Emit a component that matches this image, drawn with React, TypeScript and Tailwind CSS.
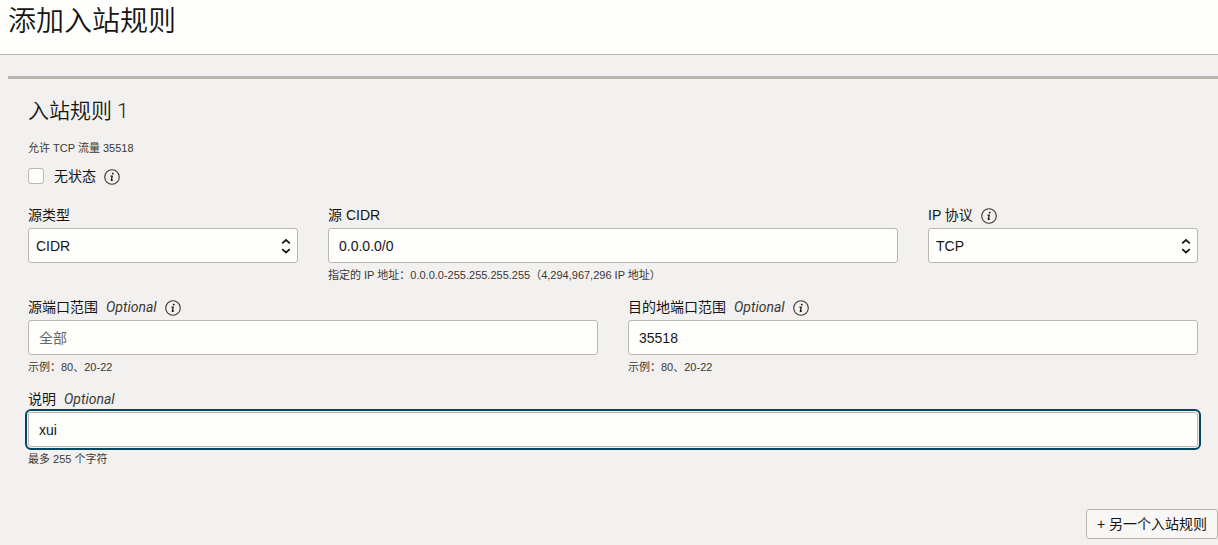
import React, { ReactNode, useState } from 'react';

interface FieldProps {
  id: string;
  label: string;
  optional?: boolean;
  info?: boolean;
  hint?: string;
  className?: string;
  children: ReactNode;
}

const InfoButton: React.FC<{ topic: string }> = ({ topic }) => (
  <button type="button" aria-label={topic} className="mt-px size-4 shrink-0">
    <svg viewBox="0 0 16 16" className="size-4" fill="none">
      <circle cx="8" cy="8" r="7.3" stroke="#3a3733" strokeWidth="1.1" />
      <circle cx="8.8" cy="4.6" r="0.95" fill="#161513" />
      <path
        d="M6.5 7.1h1.8l-1 3.9c-.1.6.6.5 1.6-.3"
        stroke="#161513"
        strokeWidth="1.2"
        strokeLinejoin="round"
      />
    </svg>
  </button>
);

const Field: React.FC<FieldProps> = ({
  id,
  label,
  optional = false,
  info = false,
  hint,
  className = '',
  children
}) => (
  <div className={className}>
    <div className="mb-[3px] flex h-5 items-center gap-2">
      <label htmlFor={id} className="flex gap-2">
        {label}
        {optional && (
          <em className="font-['Roboto','Noto_Sans_CJK_SC',sans-serif] text-[#3a3733]">
            Optional
          </em>
        )}
      </label>
      {info && <InfoButton topic={label} />}
    </div>
    {children}
    {hint && <p className="mt-1 text-[11px] leading-4 text-[#3a3733]">{hint}</p>}
  </div>
);

const TextInput: React.FC<React.InputHTMLAttributes<HTMLInputElement>> = ({
  className = '',
  ...props
}) => (
  <input
    type="text"
    className={`block h-[35px] w-full rounded-[3px] border border-[#bbb6ae] bg-[#fefefd] px-2.5 placeholder:text-[#6b6761] ${className}`}
    {...props}
  />
);

const Select: React.FC<{ id: string; options: string[] }> = ({ id, options }) => (
  <div className="relative">
    <select
      id={id}
      className="block h-[35px] w-full appearance-none rounded-[3px] border border-[#bbb6ae] bg-[#fefefd] pr-6 pl-[7px]"
    >
      {options.map((option) => (
        <option key={option}>{option}</option>
      ))}
    </select>
    <svg
      viewBox="0 0 10 16"
      className="pointer-events-none absolute top-2.5 right-[7px] h-4 w-2.5"
      fill="none"
      stroke="#161513"
      strokeWidth="1.7"
    >
      <path d="M1.2 5.4 5 2l3.8 3.4M1.2 11.1 5 14.5l3.8-3.4" />
    </svg>
  </div>
);

const App: React.FC = () => {
  const [stateless, setStateless] = useState(false);
  const [cidr, setCidr] = useState('0.0.0.0/0');
  const [sourcePorts, setSourcePorts] = useState('');
  const [destPorts, setDestPorts] = useState('35518');
  const [description, setDescription] = useState('xui');

  return (
    <div className="min-h-screen bg-[#f3f1f0] font-['Liberation_Sans','Noto_Sans_CJK_SC',sans-serif] text-sm leading-5 text-[#161513]">
      <header className="border-b border-[#bbb6ae] bg-[#fefefd] px-2 pt-0.5 pb-4">
        <h1 className="font-['Open_Sans','Noto_Sans_CJK_SC',sans-serif] text-[28px] leading-9 font-[350]">
          添加入站规则
        </h1>
      </header>

      <main className="pt-[21px] pl-2">
        <section className="border-t-3 border-[#bbb6ae] px-5 pt-[18px]">
          <h2 className="font-['Roboto','Noto_Sans_CJK_SC',sans-serif] text-[21px] leading-7 font-[350]">
            入站规则 1
          </h2>
          <p className="mt-[15px] text-[11px] leading-4 text-[#3a3733]">允许 TCP 流量 35518</p>

          <div className="mt-2.5 flex h-5 items-center gap-2">
            <label htmlFor="stateless" className="flex items-center gap-2.5">
              <input
                id="stateless"
                type="checkbox"
                checked={stateless}
                onChange={(e) => setStateless(e.target.checked)}
                className="size-4 appearance-none rounded-[3px] border border-[#bbb6ae] bg-[#fefefd] checked:bg-[#04536f]"
              />
              无状态
            </label>
            <InfoButton topic="无状态" />
          </div>

          <div className="mt-[19px] grid grid-cols-4 gap-x-[30px] gap-y-3.5">
            <Field id="source-type" label="源类型">
              <Select id="source-type" options={['CIDR']} />
            </Field>
            <Field
              id="source-cidr"
              label="源 CIDR"
              hint="指定的 IP 地址：0.0.0.0-255.255.255.255（4,294,967,296 IP 地址）"
              className="col-span-2"
            >
              <TextInput id="source-cidr" value={cidr} onChange={(e) => setCidr(e.target.value)} />
            </Field>
            <Field id="protocol" label="IP 协议" info>
              <Select id="protocol" options={['TCP']} />
            </Field>

            <Field
              id="source-ports"
              label="源端口范围"
              optional
              info
              hint="示例：80、20-22"
              className="col-span-2"
            >
              <TextInput
                id="source-ports"
                placeholder="全部"
                value={sourcePorts}
                onChange={(e) => setSourcePorts(e.target.value)}
              />
            </Field>
            <Field
              id="dest-ports"
              label="目的地端口范围"
              optional
              info
              hint="示例：80、20-22"
              className="col-span-2"
            >
              <TextInput
                id="dest-ports"
                value={destPorts}
                onChange={(e) => setDestPorts(e.target.value)}
              />
            </Field>

            <Field
              id="description"
              label="说明"
              optional
              hint="最多 255 个字符"
              className="col-span-4"
            >
              <TextInput
                id="description"
                className="outline-2 outline-offset-1 outline-[#00485f]"
                value={description}
                onChange={(e) => setDescription(e.target.value)}
              />
            </Field>
          </div>
        </section>

        <div className="mt-[42px] flex justify-end">
          <button
            type="button"
            className="h-[30px] rounded-[3px] border border-[#bbb6ae] bg-[#f8f7f6] px-2.5"
          >
            + 另一个入站规则
          </button>
        </div>
      </main>
    </div>
  );
};

export default App;
